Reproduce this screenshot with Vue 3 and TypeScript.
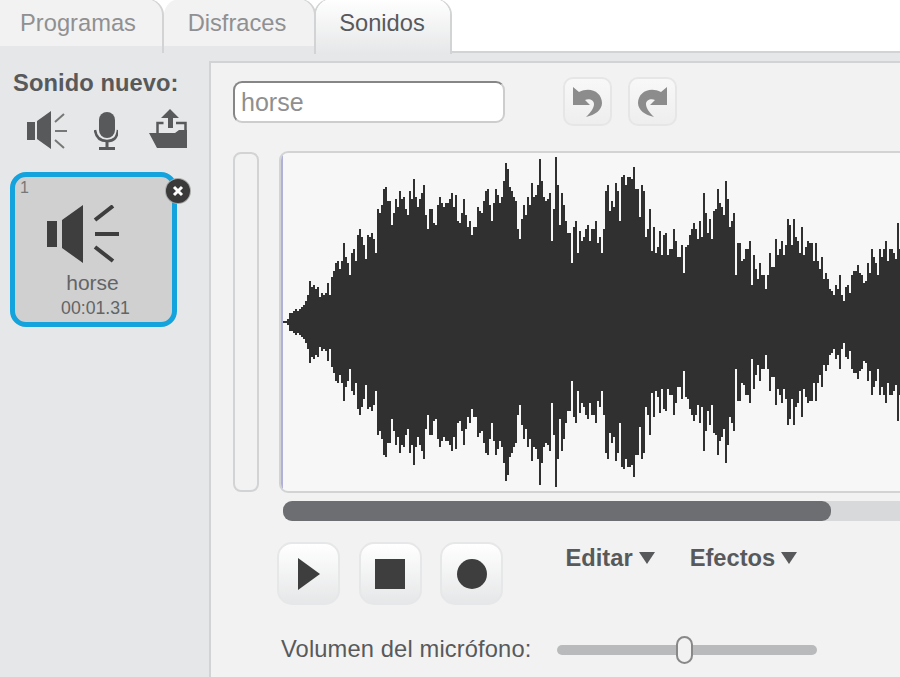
<script setup lang="ts">
const tops: number[] = [528,528,522,504,504,498,492,498,492,486,480,468,450,408,426,420,432,426,456,444,450,444,414,450,396,378,354,348,372,348,294,336,354,390,324,312,348,270,252,276,300,342,270,276,264,282,324,192,204,180,132,126,168,168,240,204,162,186,138,162,156,192,210,138,162,102,156,186,162,144,120,210,252,192,192,234,240,180,156,174,186,174,174,162,144,186,150,228,234,204,162,210,246,228,270,246,246,186,198,204,168,138,132,180,228,174,132,150,174,156,108,54,72,126,138,156,168,252,282,222,180,210,156,180,114,156,150,120,42,108,156,168,162,144,288,192,36,120,240,144,180,228,264,264,354,246,228,324,258,
288,276,252,240,288,252,252,228,294,276,324,252,138,120,198,168,186,114,138,228,96,90,120,96,96,102,66,132,132,216,120,138,276,252,192,318,246,324,306,258,330,270,264,330,312,312,252,288,336,336,300,384,306,300,270,252,234,252,282,228,276,144,204,264,222,282,198,192,132,174,186,210,108,162,246,228,204,390,294,294,348,342,312,312,288,420,330,372,402,354,390,390,432,390,324,366,366,282,330,312,288,330,300,222,240,300,222,276,288,324,246,330,306,288,294,294,348,294,348,372,336,402,384,402,432,438,450,420,432,390,450,468,426,420,444,390,378,378,360,384,390,414,408,354,384,312,336,354,390,312,336,312,288,348,312,312,324,342,234,312]

const center = 169
const wavePath = tops
  .map((py, i) => {
    const amp = Math.round(322 - (145 + py / 3))
    return `M${2 + i * 2} ${center - amp}h2v${amp * 2}h-2z`
  })
  .join('')
</script>

<template>
  <div class="page">
    <div class="tabs">
      <div class="tab first">Programas</div>
      <div class="tab">Disfraces</div>
      <div class="tab active">Sonidos</div>
    </div>
    <div class="main">
      <aside class="sidebar">
        <div class="new-title">Sonido nuevo:</div>
        <div class="new-icons">
          <svg class="ic-speaker" width="42" height="40" viewBox="0 0 42 40">
            <path d="M1 11h8v18H1zM11 10l14-10v38l-14-10z" fill="#58595b" />
            <path d="M29 11l9-8M29 20h12M29 29l9 8" stroke="#777" stroke-width="2" fill="none" />
          </svg>
          <svg class="ic-mic" width="24" height="40" viewBox="0 0 24 40">
            <rect x="5" y="1" width="16" height="26" rx="8" fill="#58595b" />
            <path d="M1 19c1 8 5 11 12 11s10-3 11-11" stroke="#58595b" stroke-width="2.5" fill="none" />
            <path d="M11.500 30h3v7h-3zM5 36h16v3H5z" fill="#58595b" />
          </svg>
          <svg class="ic-upload" width="38" height="40" viewBox="0 0 38 40">
            <path d="M21 0l9 9h-6v10h-5V9h-7z" fill="#58595b" />
            <path d="M8.500 24v-10h6M27 14h9.500v16" stroke="#58595b" stroke-width="2.500" fill="none" />
            <path d="M0 24h26l4-3h8v18H8z" fill="#58595b" />
          </svg>
        </div>
        <div class="card">
          <span class="card-index">1</span>
          <svg class="card-icon" width="74" height="60" viewBox="0 0 74 60">
            <path d="M0 16h10v26H0zM15 15L36 0v58L15 43z" fill="#3e3e3e" />
            <path d="M48 15l18-14M48 29h24M48 42l18 14" stroke="#3e3e3e" stroke-width="4" fill="none" />
          </svg>
          <div class="card-name">horse</div>
          <div class="card-time">00:01.31</div>
          <span class="card-close">
            <svg width="12" height="12" viewBox="0 0 12 12">
              <path d="M2 2l8 8M10 2l-8 8" stroke="#fff" stroke-width="3" fill="none" />
            </svg>
          </span>
        </div>
      </aside>
      <section class="panel">
        <div class="top-row">
          <input class="name-input" value="horse" />
          <div class="history">
            <button class="hist-btn">
              <svg width="31" height="32" viewBox="0 0 31 32">
                <path d="M1 1L7 6C18 0 30 6 30 17C30 24 23 29 14 31C19 26 22 22 22 18C22 14 17 12 13 14L18 19H1Z" fill="#8c8c8c" />
              </svg>
            </button>
            <button class="hist-btn">
              <svg class="flip" width="31" height="32" viewBox="0 0 31 32">
                <path d="M1 1L7 6C18 0 30 6 30 17C30 24 23 29 14 31C19 26 22 22 22 18C22 14 17 12 13 14L18 19H1Z" fill="#8c8c8c" />
              </svg>
            </button>
          </div>
        </div>
        <div class="editor-row">
          <div class="zoom-track"></div>
          <div class="wave-box">
            <span class="cursor"></span>
            <svg class="wave" width="619" height="338" viewBox="0 0 619 338">
              <path :d="wavePath" fill="#303030" />
            </svg>
          </div>
        </div>
        <div class="scroll-track"><div class="scroll-thumb"></div></div>
        <div class="controls">
          <button class="ctl-btn">
            <svg width="24" height="34" viewBox="0 0 24 34"><path d="M1 1l22 16L1 33z" fill="#3e3e3e" /></svg>
          </button>
          <button class="ctl-btn">
            <svg width="30" height="32" viewBox="0 0 30 32"><rect y="1" width="30" height="30" fill="#3e3e3e" /></svg>
          </button>
          <button class="ctl-btn">
            <svg width="30" height="30" viewBox="0 0 30 30"><circle cx="15" cy="15" r="15" fill="#3e3e3e" /></svg>
          </button>
          <div class="menus">
            <div class="menu">Editar<span class="caret"></span></div>
            <div class="menu">Efectos<span class="caret"></span></div>
          </div>
        </div>
        <div class="volume">
          <span class="vol-label">Volumen del micrófono:</span>
          <div class="vol-slider"><span class="vol-thumb"></span></div>
        </div>
      </section>
    </div>
  </div>
</template>

<style>
html, body { margin: 0; background: #fff; }
</style>

<style scoped>
.page {
  width: 900px;
  height: 677px;
  overflow: hidden;
  display: flex;
  flex-direction: column;
  font-family: "Liberation Sans", Arial, sans-serif;
  font-size: 23.7px;
  color: #58595b;
}
.tabs {
  display: flex;
  height: 53px;
  flex: none;
  border-bottom: 2px solid #d2d3d4;
  box-sizing: border-box;
  gap: 2px;
  background: #fff;
}
.tab {
  box-sizing: border-box;
  width: 150px;
  height: 54px;
  margin-top: -1px;
  padding: 11px 4px 0 0;
  text-align: center;
  background: #f2f2f2;
  border-radius: 16px 16px 0 0;
  box-shadow: 2px 0 0 #d2d3d4;
  color: #8f9092;
  position: relative;
}
.tab::after {
  content: "";
  position: absolute;
  left: 0;
  right: 0;
  top: 47px;
  height: 7px;
  background: #e6e7e8;
}
.tab.first {
  width: 182px;
  margin-left: -20px;
  padding-left: 14px;
  padding-right: 0;
}
.tab.active {
  width: 134px;
  padding-right: 2px;
  background: linear-gradient(#fff, #e6e7e8);
  color: #58595b;
  box-shadow: 2px 0 0 #d2d3d4, -2px 0 0 #d2d3d4;
  height: 55px;
  z-index: 1;
}
.tab.active::after { display: none; }
.main {
  flex: 1;
  display: flex;
  background: #e6e7e8;
  min-height: 0;
}
.sidebar {
  width: 209px;
  flex: none;
  box-sizing: border-box;
  padding: 16px 0 0 10px;
}
.new-title {
  font-weight: 700;
  margin-left: 3px;
  line-height: 28px;
  letter-spacing: 0.08px;
}
.new-icons {
  display: flex;
  align-items: flex-start;
  margin: 13px 0 0 16px;
}
.ic-speaker { margin-top: 1px; }
.ic-mic { margin: 1px 0 0 26px; }
.ic-upload { margin-left: 31px; margin-top: -1px; }
.card {
  position: relative;
  box-sizing: border-box;
  width: 167px;
  height: 155px;
  margin-top: 21px;
  border: 5px solid #14a3dc;
  border-radius: 16px;
  background: #d0d0d0;
  text-align: center;
  padding-top: 28px;
  color: #636466;
}
.card-index {
  position: absolute;
  left: 5px;
  top: 2px;
  font-size: 16px;
  color: #777;
}
.card-icon { display: block; margin: 0 0 0 32px; }
.card-name {
  font-size: 21px;
  line-height: 24px;
  margin-top: 6px;
  margin-left: -2px;
}
.card-time {
  font-size: 17.7px;
  line-height: 20px;
  margin-top: 3px;
  margin-left: 4px;
}
.card-close {
  position: absolute;
  right: -18px;
  top: 2px;
  width: 24px;
  height: 24px;
  border-radius: 50%;
  background: #3a3a3a;
  box-shadow: 0 0 0 1px #a8a8a8;
  display: flex;
  align-items: center;
  justify-content: center;
}
.panel {
  flex: 1;
  min-width: 0;
  margin-top: 8px;
  background: #f2f2f2;
  border: solid #d2d3d4;
  border-width: 2px 0 0 2px;
  padding: 14px 0 0 22px;
}
.top-row {
  display: flex;
  align-items: center;
  height: 49px;
}
.name-input {
  box-sizing: border-box;
  width: 272px;
  height: 42px;
  border: 2px solid #cdcdcd;
  border-top-color: #868686;
  border-left-color: #868686;
  border-radius: 9px;
  background: #fff;
  font: 25px "Liberation Sans", Arial, sans-serif;
  color: #8f8f8f;
  padding: 2px 6px 0;
  outline: none;
}
.history {
  display: flex;
  gap: 16px;
  margin-left: 58px;
}
.hist-btn {
  box-sizing: border-box;
  width: 49px;
  height: 49px;
  padding: 0;
  display: flex;
  align-items: center;
  justify-content: center;
  border: 2px solid #e6e6e6;
  border-radius: 10px;
  background: linear-gradient(#f8f8f8, #eeeeee);
}
.flip { transform: scaleX(-1); }
.editor-row {
  display: flex;
  margin-top: 25px;
  height: 342px;
}
.zoom-track {
  box-sizing: border-box;
  flex: none;
  width: 26px;
  height: 340px;
  margin-top: 1px;
  border: 2px solid #d2d3d4;
  border-radius: 8px;
  background: #f2f2f2;
}
.wave-box {
  position: relative;
  box-sizing: border-box;
  width: 640px;
  height: 342px;
  flex: none;
  margin-left: 20px;
  border: 2px solid #d2d3d4;
  border-radius: 9px 0 0 9px;
  background: #f7f7f7;
  overflow: hidden;
}
.cursor {
  position: absolute;
  left: 0;
  top: 0;
  bottom: 0;
  width: 2px;
  background: #b0b0d8;
  z-index: 1;
}
.wave { display: block; }
.scroll-track {
  margin: 8px 0 0 50px;
  width: 640px;
  height: 20px;
  border-radius: 9px;
  background: #d8d9da;
}
.scroll-thumb {
  width: 548px;
  height: 20px;
  border-radius: 9px;
  background: #6d6e71;
}
.controls {
  display: flex;
  align-items: flex-start;
  gap: 18.5px;
  margin: 21px 0 0 44px;
}
.ctl-btn {
  box-sizing: border-box;
  width: 63px;
  height: 63px;
  padding: 0;
  display: flex;
  align-items: center;
  justify-content: center;
  border: 2px solid #e6e7e8;
  border-radius: 15px;
  background: linear-gradient(#fff, #e6e7e8);
}
.menus {
  display: flex;
  gap: 35px;
  margin: 2px 0 0 44px;
  font-weight: 700;
}
.menu {
  display: flex;
  align-items: center;
  gap: 6px;
  line-height: 28px;
}
.caret {
  width: 0;
  height: 0;
  border: solid transparent;
  border-width: 12px 8px 0;
  border-top-color: #58595b;
}
.volume {
  display: flex;
  align-items: center;
  margin: 30px 0 0 48px;
  height: 28px;
}
.vol-label { width: 276px; flex: none; letter-spacing: 0.13px; }
.vol-slider {
  position: relative;
  top: 1px;
  width: 260px;
  height: 10px;
  border-radius: 5px;
  background: #b9babb;
}
.vol-thumb {
  position: absolute;
  left: 119px;
  top: -9px;
  box-sizing: border-box;
  width: 17px;
  height: 28px;
  border: 2px solid #888;
  border-radius: 9px;
  background: #f2f2f2;
}
</style>
